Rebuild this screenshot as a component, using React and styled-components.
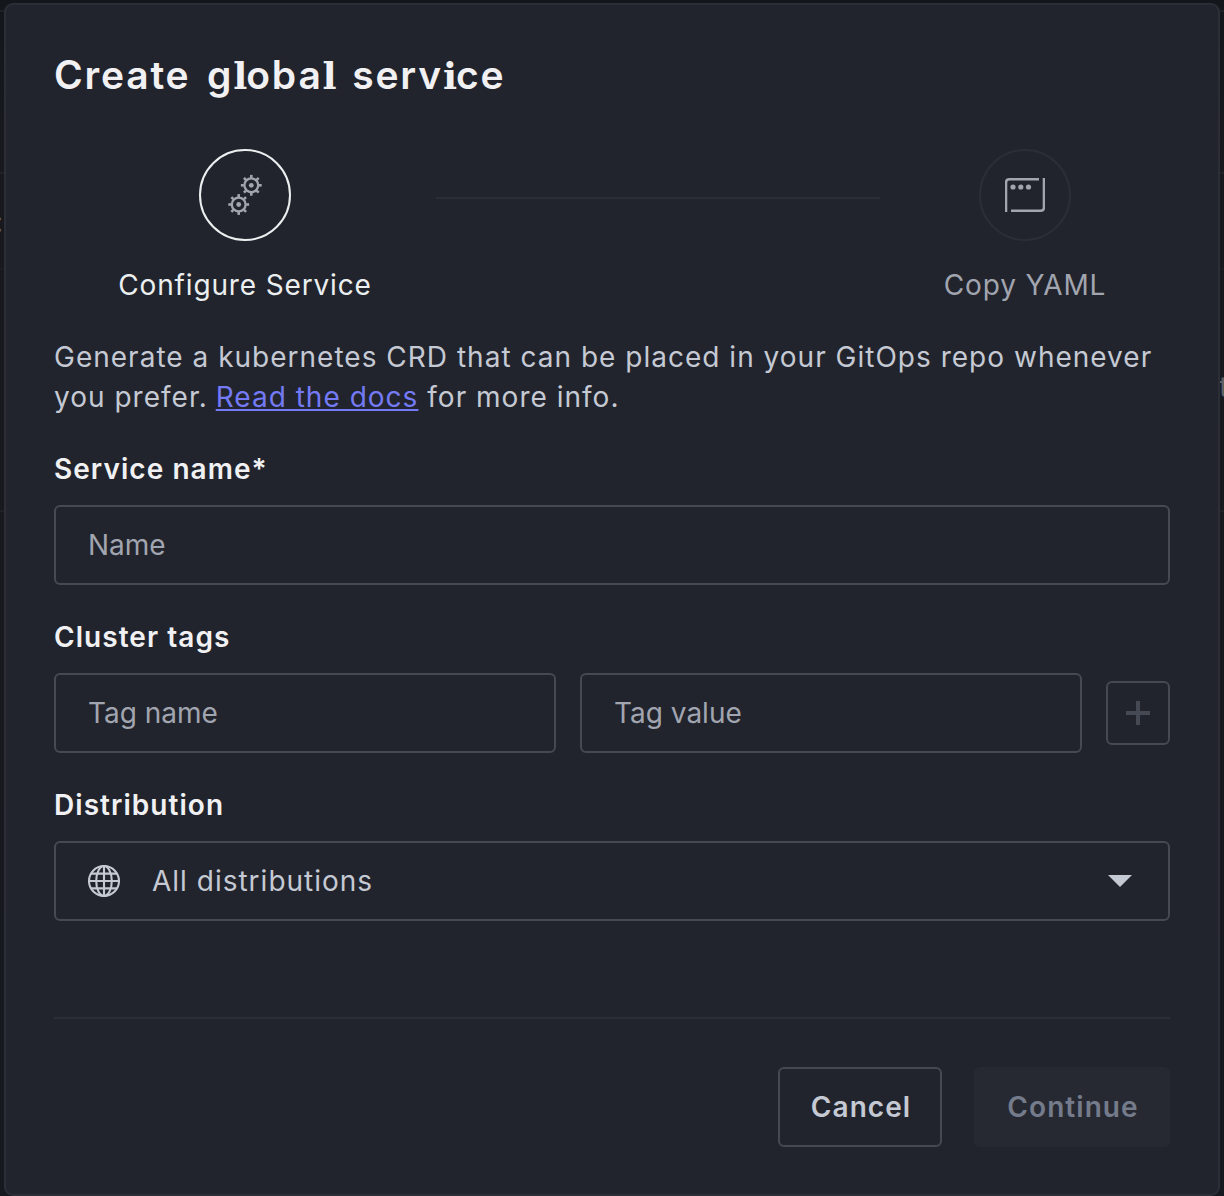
import React from 'react';
import styled, { createGlobalStyle, css } from 'styled-components';

const GlobalStyle = createGlobalStyle`
  * { box-sizing: border-box; }
  html, body { margin: 0; padding: 0; background: #16191e; }
  body { font-family: Inter, "Liberation Sans", sans-serif; overflow: hidden; }
`;

const Page = styled.div`
  position: relative;
  height: 1196px;
  overflow: hidden;
  padding: 3px 4px 0;
  background: linear-gradient(#13171b, #17191e 180px, #16191f);
`;

const BackdropRule = styled.div`
  position: absolute;
  left: 0;
  right: 0;
  top: ${(p) => p.$top}px;
  height: 2px;
  background: ${(p) => (p.$faint ? '#1a1c21' : '#1f2125')};
`;

const BackdropText = styled.span`
  position: absolute;
  left: ${(p) => p.$left}px;
  top: ${(p) => p.$top}px;
  font-size: 28px;
  line-height: 40px;
  color: #606268;
`;

const Dialog = styled.section`
  position: relative;
  display: flex;
  flex-direction: column;
  height: 1193px;
  padding: 48px 48px 47px;
  border: 2px solid #2b2e37;
  border-radius: 9px;
  background: #21242c;
  color: #c5c9d3;
`;

const Title = styled.h1`
  margin: -2px 0 2px;
  height: 48px;
  font-size: 39px;
  line-height: 48px;
  font-weight: 600;
  letter-spacing: 1.8px;
  word-spacing: 5px;
  white-space: nowrap;
  color: #f1f1f3;
`;

const Slab = styled.span`
  font-family: "DejaVu Serif", serif;
  font-size: 37px;
  line-height: 1;
  font-weight: 700;
  letter-spacing: -1px;
`;

const Stepper = styled.div`
  display: flex;
  margin-top: 48px;
  height: 156px;
`;

const Step = styled.div`
  display: flex;
  flex-direction: column;
  align-items: center;
  width: ${(p) => p.$width}px;
  color: ${(p) => (p.$active ? '#ebeff0' : '#a1a5b0')};
`;

const StepCircle = styled.div`
  display: flex;
  align-items: center;
  justify-content: center;
  width: 92px;
  height: 92px;
  border: 2px solid ${(p) => (p.$active ? '#ebeff0' : '#2b2e37')};
  border-radius: 50%;
  color: #a1a5b0;
`;

const StepLabel = styled.span`
  margin-top: 24px;
  font-size: 28px;
  line-height: 40px;
  letter-spacing: 0.85px;
  white-space: nowrap;
`;

const Connector = styled.div`
  flex: 1;
  height: 2px;
  margin-top: 48px;
  background: #2b2e37;
`;

const Intro = styled.p`
  margin: 32px 0 0;
  font-size: 28px;
  line-height: 40px;
  letter-spacing: 1.01px;
  white-space: nowrap;
`;

const DocsLink = styled.a`
  margin-left: -1px;
  color: #747af6;
  text-decoration: underline;
`;

const Field = styled.div`
  display: flex;
  flex-direction: column;
  gap: 16px;
  margin-top: 32px;
`;

const Label = styled.label`
  height: 40px;
  font-size: 28px;
  line-height: 40px;
  font-weight: 600;
  letter-spacing: 1.05px;
  color: #f1f1f3;
`;

const outlined = css`
  border: 2px solid #454954;
  border-radius: 6px;
  background: transparent;
`;

const Input = styled.input`
  ${outlined}
  flex: 1;
  min-width: 0;
  width: 100%;
  flex-basis: auto;
  height: 80px;
  padding: 0 32px;
  font-family: inherit;
  font-size: 28px;
  outline: none;
  color: #ebeff0;
  &::placeholder { color: #a1a5b0; opacity: 1; }
`;

const TagRow = styled.div`
  display: flex;
  align-items: center;
  gap: 24px;
`;

const AddButton = styled.button`
  ${outlined}
  display: flex;
  align-items: center;
  justify-content: center;
  flex: none;
  width: 64px;
  height: 64px;
  padding: 0;
  color: #454954;
`;

const Select = styled.div`
  ${outlined}
  display: flex;
  align-items: center;
  height: 80px;
  padding: 0 36px 0 32px;
`;

const SelectValue = styled.span`
  flex: 1;
  margin-left: 32px;
  font-size: 28px;
  line-height: 40px;
  letter-spacing: 1px;
`;

const Footer = styled.footer`
  display: flex;
  justify-content: flex-end;
  gap: 32px;
  margin-top: auto;
  padding-top: 48px;
  border-top: 2px solid #2b2e37;
`;

const Button = styled.button`
  width: ${(p) => p.$width}px;
  height: 80px;
  padding: 0 0 0 2px;
  border: 2px solid ${(p) => (p.$disabled ? 'transparent' : '#454954')};
  border-radius: 6px;
  background: ${(p) => (p.$disabled ? '#272932' : 'transparent')};
  background-clip: border-box;
  font-family: inherit;
  font-size: 28px;
  line-height: 40px;
  font-weight: 600;
  letter-spacing: 1.05px;
  color: ${(p) => (p.$disabled ? '#747b8b' : '#c5c9d3')};
`;

const TEETH = [0, 45, 90, 135, 180, 225, 270, 315];

const Gear = ({ cx, cy }) => (
  <g transform={`translate(${cx} ${cy})`}>
    <circle r="6.9" fill="none" stroke="currentColor" strokeWidth="2.3" />
    <circle r="2.4" fill="currentColor" />
    {TEETH.map((a) => (
      <path key={a} d="M0-7.5V-10.4" stroke="currentColor" strokeWidth="2.6" transform={`rotate(${a})`} />
    ))}
  </g>
);

const GearsIcon = () => (
  <svg width="40" height="44" viewBox="0 0 40 44">
    <Gear cx={26.3} cy={12.3} />
    <Gear cx={13.7} cy={31.5} />
  </svg>
);

const WindowIcon = () => (
  <svg width="40" height="34" viewBox="0 0 40 34" fill="none">
    <path d="M1.1 34V4.5Q1.1 1.3 4.3 1.3H34M38.9 0V29.5Q38.9 32.7 35.7 32.7H6" stroke="currentColor" strokeWidth="2.4" />
    <circle cx="8" cy="9" r="2.6" fill="currentColor" />
    <circle cx="15.8" cy="9" r="2.6" fill="currentColor" />
    <circle cx="23.5" cy="9" r="2.6" fill="currentColor" />
  </svg>
);

const GlobeIcon = () => (
  <svg width="32" height="32" viewBox="0 0 32 32" fill="none" stroke="currentColor" strokeWidth="2.1">
    <circle cx="16" cy="16" r="15" />
    <ellipse cx="16" cy="16" rx="7.8" ry="15" />
    <path d="M16 1V31M1 16H31M3 8.6H29M3 23.4H29" />
  </svg>
);

const PlusIcon = () => (
  <svg width="24" height="24" viewBox="0 0 24 24">
    <path d="M12 0V24M0 12H24" stroke="currentColor" strokeWidth="4" />
  </svg>
);

const CaretIcon = () => (
  <svg width="24" height="12" viewBox="0 0 24 12">
    <path d="M0 0H24L12 12Z" fill="currentColor" />
  </svg>
);

export default function App() {
  return (
    <>
      <GlobalStyle />
      <Page>
        <BackdropRule $top={10} />
        <BackdropRule $top={172} />
        <BackdropRule $top={268} $faint />
        <BackdropRule $top={510} />
        <BackdropText $left={-5} $top={202}>:</BackdropText>
        <BackdropText $left={1219} $top={367}>t</BackdropText>
        <Dialog>
          <Title>
            Create g<Slab>l</Slab>oba<Slab>l</Slab> serv<Slab>i</Slab>ce
          </Title>
          <Stepper>
            <Step $active $width={382}>
              <StepCircle $active><GearsIcon /></StepCircle>
              <StepLabel>Configure Service</StepLabel>
            </Step>
            <Connector />
            <Step $width={290}>
              <StepCircle><WindowIcon /></StepCircle>
              <StepLabel>Copy YAML</StepLabel>
            </Step>
          </Stepper>
          <Intro>
            Generate a kubernetes CRD that can be placed in your GitOps repo whenever
            <br />
            you prefer. <DocsLink>Read the docs</DocsLink> for more info.
          </Intro>
          <Field>
            <Label>Service name*</Label>
            <Input placeholder="Name" />
          </Field>
          <Field>
            <Label>Cluster tags</Label>
            <TagRow>
              <Input placeholder="Tag name" />
              <Input placeholder="Tag value" />
              <AddButton><PlusIcon /></AddButton>
            </TagRow>
          </Field>
          <Field>
            <Label>Distribution</Label>
            <Select>
              <GlobeIcon />
              <SelectValue>All distributions</SelectValue>
              <CaretIcon />
            </Select>
          </Field>
          <Footer>
            <Button $width={164}>Cancel</Button>
            <Button $width={196} $disabled>Continue</Button>
          </Footer>
        </Dialog>
      </Page>
    </>
  );
}
